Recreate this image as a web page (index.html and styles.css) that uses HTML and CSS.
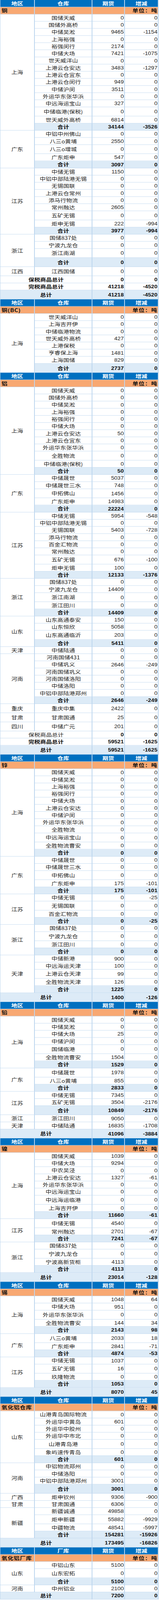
FILE: index.html
```html
<!DOCTYPE html>
<html lang="zh-CN">
<head>
<meta charset="utf-8">
<title>库存</title>
<link rel="stylesheet" href="styles.css">
</head>
<body>
<div class="frame">
<div class="sheet">
<!-- 铜 -->
<div class="r hd"><div class="c c1">地区</div><div class="c c2">仓库</div><div class="c c3">期货</div><div class="c c4">增减</div></div>
<div class="r un"><div class="c c1 ul">铜</div><div class="c c2"></div><div class="c c3"></div><div class="c c4 ur">单位：吨</div></div>
<div class="blk"><div class="rg">上海</div><div class="rows">
<div class="r"><div class="c c2">国储天威</div><div class="c c3">0</div><div class="c c4">0</div></div>
<div class="r"><div class="c c2">国储外高桥</div><div class="c c3">0</div><div class="c c4">0</div></div>
<div class="r"><div class="c c2">中储吴淞</div><div class="c c3">9465</div><div class="c c4">-1154</div></div>
<div class="r"><div class="c c2">上海裕强</div><div class="c c3">0</div><div class="c c4">0</div></div>
<div class="r"><div class="c c2">裕强闵行</div><div class="c c3">2174</div><div class="c c4">0</div></div>
<div class="r"><div class="c c2">中储大场</div><div class="c c3">7421</div><div class="c c4">-1075</div></div>
<div class="r"><div class="c c2">世天威洋山</div><div class="c c3">0</div><div class="c c4">0</div></div>
<div class="r"><div class="c c2">上港云仓安达</div><div class="c c3">3483</div><div class="c c4">-1297</div></div>
<div class="r"><div class="c c2">上港云仓宜东</div><div class="c c3">0</div><div class="c c4">0</div></div>
<div class="r"><div class="c c2">上港云仓闵行</div><div class="c c3">949</div><div class="c c4">0</div></div>
<div class="r"><div class="c c2">中储沪闵</div><div class="c c3">3511</div><div class="c c4">0</div></div>
<div class="r"><div class="c c2">外运华东张华浜</div><div class="c c3">0</div><div class="c c4">0</div></div>
<div class="r"><div class="c c2">中远海运宝山</div><div class="c c3">327</div><div class="c c4">0</div></div>
<div class="r t"><div class="c c2">中储临港(保税)</div><div class="c c3">0</div><div class="c c4">0</div></div>
<div class="r"><div class="c c2">世天威外高桥</div><div class="c c3">6814</div><div class="c c4">0</div></div>
<div class="r s"><div class="c c2">合计</div><div class="c c3">34144</div><div class="c c4">-3526</div></div>
</div></div>
<div class="blk"><div class="rg">广东</div><div class="rows">
<div class="r"><div class="c c2">中铝中州佛山</div><div class="c c3">0</div><div class="c c4">0</div></div>
<div class="r"><div class="c c2">八三o黄埔</div><div class="c c3">2550</div><div class="c c4">0</div></div>
<div class="r t"><div class="c c2">八三o增城</div><div class="c c3">0</div><div class="c c4">0</div></div>
<div class="r"><div class="c c2">广东炬申</div><div class="c c3">547</div><div class="c c4">0</div></div>
<div class="r s"><div class="c c2">合计</div><div class="c c3">3097</div><div class="c c4">0</div></div>
</div></div>
<div class="blk"><div class="rg">江苏</div><div class="rows">
<div class="r"><div class="c c2">中储无锡</div><div class="c c3">1150</div><div class="c c4">0</div></div>
<div class="r"><div class="c c2">中铝中部陆港无锡</div><div class="c c3">0</div><div class="c c4">0</div></div>
<div class="r"><div class="c c2">无锡国联</div><div class="c c3">0</div><div class="c c4">0</div></div>
<div class="r"><div class="c c2">上港云仓常州</div><div class="c c3">0</div><div class="c c4">0</div></div>
<div class="r"><div class="c c2">添马行物流</div><div class="c c3">0</div><div class="c c4">0</div></div>
<div class="r"><div class="c c2">常州融达</div><div class="c c3">2605</div><div class="c c4">0</div></div>
<div class="r t"><div class="c c2">五矿无锡</div><div class="c c3">0</div><div class="c c4">0</div></div>
<div class="r"><div class="c c2">炬申无锡</div><div class="c c3">222</div><div class="c c4">-994</div></div>
<div class="r s"><div class="c c2">合计</div><div class="c c3">3977</div><div class="c c4">-994</div></div>
</div></div>
<div class="blk"><div class="rg">浙江</div><div class="rows">
<div class="r"><div class="c c2">国储837处</div><div class="c c3">0</div><div class="c c4">0</div></div>
<div class="r"><div class="c c2">宁波九龙仓</div><div class="c c3">0</div><div class="c c4">0</div></div>
<div class="r t"><div class="c c2">浙江南湖</div><div class="c c3">0</div><div class="c c4">0</div></div>
<div class="r s t"><div class="c c2">合计</div><div class="c c3">0</div><div class="c c4">0</div></div>
</div></div>
<div class="r t"><div class="c c1">江西</div><div class="c c2">江西国储</div><div class="c c3">0</div><div class="c c4">0</div></div>
<div class="r w"><div class="c c12">保税商品总计</div><div class="c c3">0</div><div class="c c4">0</div></div>
<div class="r w"><div class="c c12">完税商品总计</div><div class="c c3">41218</div><div class="c c4">-4520</div></div>
<div class="r g t"><div class="c c12">总计</div><div class="c c3">41218</div><div class="c c4">-4520</div></div>

<!-- 铜(BC) -->
<div class="r hd"><div class="c c1">地区</div><div class="c c2">仓库</div><div class="c c3">期货</div><div class="c c4">增减</div></div>
<div class="r un"><div class="c c1 ul">铜(BC)</div><div class="c c2"></div><div class="c c3"></div><div class="c c4 ur">单位：吨</div></div>
<div class="blk"><div class="rg">上海</div><div class="rows">
<div class="r"><div class="c c2">世天威洋山</div><div class="c c3">0</div><div class="c c4">0</div></div>
<div class="r"><div class="c c2">上海吉开伊</div><div class="c c3">0</div><div class="c c4">0</div></div>
<div class="r"><div class="c c2">中储临港物流</div><div class="c c3">0</div><div class="c c4">0</div></div>
<div class="r"><div class="c c2">世天威外高桥</div><div class="c c3">427</div><div class="c c4">0</div></div>
<div class="r"><div class="c c2">上港保税</div><div class="c c3">0</div><div class="c c4">0</div></div>
<div class="r"><div class="c c2">亨睿保上海</div><div class="c c3">1481</div><div class="c c4">0</div></div>
<div class="r"><div class="c c2">上海国储</div><div class="c c3">829</div><div class="c c4">0</div></div>
<div class="r s t"><div class="c c2">合计</div><div class="c c3">2737</div><div class="c c4">0</div></div>
</div></div>

<!-- 铝 -->
<div class="r hd"><div class="c c1">地区</div><div class="c c2">仓库</div><div class="c c3">期货</div><div class="c c4">增减</div></div>
<div class="r un"><div class="c c1 ul">铝</div><div class="c c2"></div><div class="c c3"></div><div class="c c4 ur">单位：吨</div></div>
<div class="blk"><div class="rg">上海</div><div class="rows">
<div class="r"><div class="c c2">国储天威</div><div class="c c3">0</div><div class="c c4">0</div></div>
<div class="r"><div class="c c2">国储外高桥</div><div class="c c3">0</div><div class="c c4">0</div></div>
<div class="r"><div class="c c2">中储吴淞</div><div class="c c3">0</div><div class="c c4">0</div></div>
<div class="r"><div class="c c2">上海裕强</div><div class="c c3">0</div><div class="c c4">0</div></div>
<div class="r"><div class="c c2">裕强闵行</div><div class="c c3">0</div><div class="c c4">0</div></div>
<div class="r"><div class="c c2">中储大场</div><div class="c c3">0</div><div class="c c4">0</div></div>
<div class="r"><div class="c c2">上港云仓安达</div><div class="c c3">50</div><div class="c c4">0</div></div>
<div class="r"><div class="c c2">上港云仓宜东</div><div class="c c3">0</div><div class="c c4">0</div></div>
<div class="r"><div class="c c2">外运华东张华浜</div><div class="c c3">0</div><div class="c c4">0</div></div>
<div class="r t"><div class="c c2">全胜物流</div><div class="c c3">0</div><div class="c c4">0</div></div>
<div class="r"><div class="c c2">中储临港(保税)</div><div class="c c3">0</div><div class="c c4">0</div></div>
<div class="r s"><div class="c c2">合计</div><div class="c c3">50</div><div class="c c4">0</div></div>
</div></div>
<div class="blk"><div class="rg">广东</div><div class="rows">
<div class="r"><div class="c c2">中储晟世</div><div class="c c3">5037</div><div class="c c4">0</div></div>
<div class="r"><div class="c c2">中储晟世三水</div><div class="c c3">748</div><div class="c c4">0</div></div>
<div class="r t"><div class="c c2">中拓佛山</div><div class="c c3">1456</div><div class="c c4">0</div></div>
<div class="r"><div class="c c2">广东炬申</div><div class="c c3">14983</div><div class="c c4">0</div></div>
<div class="r s"><div class="c c2">合计</div><div class="c c3">22224</div><div class="c c4">0</div></div>
</div></div>
<div class="blk"><div class="rg">江苏</div><div class="rows">
<div class="r"><div class="c c2">中储无锡</div><div class="c c3">5954</div><div class="c c4">-548</div></div>
<div class="r"><div class="c c2">中铝中部陆港无锡</div><div class="c c3">0</div><div class="c c4">0</div></div>
<div class="r"><div class="c c2">无锡国联</div><div class="c c3">5403</div><div class="c c4">-728</div></div>
<div class="r"><div class="c c2">添马行物流</div><div class="c c3">0</div><div class="c c4">0</div></div>
<div class="r"><div class="c c2">百金汇物流</div><div class="c c3">0</div><div class="c c4">0</div></div>
<div class="r"><div class="c c2">常州融达</div><div class="c c3">0</div><div class="c c4">0</div></div>
<div class="r t"><div class="c c2">五矿无锡</div><div class="c c3">676</div><div class="c c4">-100</div></div>
<div class="r"><div class="c c2">炬申无锡</div><div class="c c3">100</div><div class="c c4">0</div></div>
<div class="r s"><div class="c c2">合计</div><div class="c c3">12133</div><div class="c c4">-1376</div></div>
</div></div>
<div class="blk"><div class="rg">浙江</div><div class="rows">
<div class="r"><div class="c c2">国储837处</div><div class="c c3">0</div><div class="c c4">0</div></div>
<div class="r"><div class="c c2">宁波九龙仓</div><div class="c c3">14409</div><div class="c c4">0</div></div>
<div class="r t"><div class="c c2">浙江南湖</div><div class="c c3">0</div><div class="c c4">0</div></div>
<div class="r"><div class="c c2">浙江田川</div><div class="c c3">0</div><div class="c c4">0</div></div>
<div class="r s"><div class="c c2">合计</div><div class="c c3">14409</div><div class="c c4">0</div></div>
</div></div>
<div class="blk"><div class="rg">山东</div><div class="rows">
<div class="r"><div class="c c2">山东高通泰安</div><div class="c c3">150</div><div class="c c4">0</div></div>
<div class="r"><div class="c c2">山东恒欣</div><div class="c c3">5058</div><div class="c c4">0</div></div>
<div class="r t"><div class="c c2">山东高通临沂</div><div class="c c3">203</div><div class="c c4">0</div></div>
<div class="r s"><div class="c c2">合计</div><div class="c c3">5411</div><div class="c c4">0</div></div>
</div></div>
<div class="r"><div class="c c1">天津</div><div class="c c2">中储陆通</div><div class="c c3">0</div><div class="c c4">0</div></div>
<div class="blk"><div class="rg">河南</div><div class="rows">
<div class="r"><div class="c c2">河南国储431</div><div class="c c3">0</div><div class="c c4">0</div></div>
<div class="r"><div class="c c2">中储巩义</div><div class="c c3">2646</div><div class="c c4">-249</div></div>
<div class="r"><div class="c c2">河南国储巩义</div><div class="c c3">0</div><div class="c c4">0</div></div>
<div class="r"><div class="c c2">河南国储洛阳</div><div class="c c3">0</div><div class="c c4">0</div></div>
<div class="r"><div class="c c2">中储洛阳</div><div class="c c3">0</div><div class="c c4">0</div></div>
<div class="r"><div class="c c2">中铝中部陆港郑州</div><div class="c c3">0</div><div class="c c4">0</div></div>
<div class="r s"><div class="c c2">合计</div><div class="c c3">2646</div><div class="c c4">-249</div></div>
</div></div>
<div class="r t"><div class="c c1">重庆</div><div class="c c2">重庆中集</div><div class="c c3">2422</div><div class="c c4">0</div></div>
<div class="r t"><div class="c c1">甘肃</div><div class="c c2">甘肃国通</div><div class="c c3">25</div><div class="c c4">0</div></div>
<div class="r t"><div class="c c1">四川</div><div class="c c2">中储广元</div><div class="c c3">201</div><div class="c c4">0</div></div>
<div class="r w"><div class="c c12 nb">保税商品总计</div><div class="c c3">0</div><div class="c c4">0</div></div>
<div class="r w"><div class="c c12">完税商品总计</div><div class="c c3">59521</div><div class="c c4">-1625</div></div>
<div class="r g t"><div class="c c12">总计</div><div class="c c3">59521</div><div class="c c4">-1625</div></div>

<!-- 锌 -->
<div class="r hd"><div class="c c1">地区</div><div class="c c2">仓库</div><div class="c c3">期货</div><div class="c c4">增减</div></div>
<div class="r un"><div class="c c1 ul">锌</div><div class="c c2"></div><div class="c c3"></div><div class="c c4 ur">单位：吨</div></div>
<div class="blk"><div class="rg">上海</div><div class="rows">
<div class="r"><div class="c c2">国储天威</div><div class="c c3">0</div><div class="c c4">0</div></div>
<div class="r"><div class="c c2">中储吴淞</div><div class="c c3">0</div><div class="c c4">0</div></div>
<div class="r"><div class="c c2">上海裕强</div><div class="c c3">0</div><div class="c c4">0</div></div>
<div class="r"><div class="c c2">裕强闵行</div><div class="c c3">0</div><div class="c c4">0</div></div>
<div class="r"><div class="c c2">中储大场</div><div class="c c3">0</div><div class="c c4">0</div></div>
<div class="r"><div class="c c2">上港云仓安达</div><div class="c c3">0</div><div class="c c4">0</div></div>
<div class="r"><div class="c c2">中储沪闵</div><div class="c c3">0</div><div class="c c4">0</div></div>
<div class="r"><div class="c c2">外运华东张华浜</div><div class="c c3">0</div><div class="c c4">0</div></div>
<div class="r"><div class="c c2">全胜物流</div><div class="c c3">0</div><div class="c c4">0</div></div>
<div class="r t"><div class="c c2">中远海运宝山</div><div class="c c3">0</div><div class="c c4">0</div></div>
<div class="r"><div class="c c2">全胜物流曹安</div><div class="c c3">0</div><div class="c c4">0</div></div>
<div class="r s"><div class="c c2">合计</div><div class="c c3">0</div><div class="c c4">0</div></div>
</div></div>
<div class="blk"><div class="rg">广东</div><div class="rows">
<div class="r"><div class="c c2">中储晟世</div><div class="c c3">0</div><div class="c c4">0</div></div>
<div class="r"><div class="c c2">中储晟世三水</div><div class="c c3">0</div><div class="c c4">0</div></div>
<div class="r t"><div class="c c2">中拓佛山</div><div class="c c3">0</div><div class="c c4">0</div></div>
<div class="r"><div class="c c2">广东炬申</div><div class="c c3">175</div><div class="c c4">-101</div></div>
<div class="r s"><div class="c c2">合计</div><div class="c c3">175</div><div class="c c4">-101</div></div>
</div></div>
<div class="blk"><div class="rg">江苏</div><div class="rows">
<div class="r"><div class="c c2">中储无锡</div><div class="c c3">0</div><div class="c c4">-25</div></div>
<div class="r t"><div class="c c2">无锡国联</div><div class="c c3">0</div><div class="c c4">0</div></div>
<div class="r"><div class="c c2">百金汇物流</div><div class="c c3">0</div><div class="c c4">0</div></div>
<div class="r s"><div class="c c2">合计</div><div class="c c3">0</div><div class="c c4">-25</div></div>
</div></div>
<div class="blk"><div class="rg">浙江</div><div class="rows">
<div class="r"><div class="c c2">国储837处</div><div class="c c3">0</div><div class="c c4">0</div></div>
<div class="r t"><div class="c c2">宁波九龙仓</div><div class="c c3">0</div><div class="c c4">0</div></div>
<div class="r"><div class="c c2">浙江田川</div><div class="c c3">0</div><div class="c c4">0</div></div>
<div class="r s"><div class="c c2">合计</div><div class="c c3">0</div><div class="c c4">0</div></div>
</div></div>
<div class="blk"><div class="rg">天津</div><div class="rows">
<div class="r"><div class="c c2">中储新港</div><div class="c c3">900</div><div class="c c4">0</div></div>
<div class="r"><div class="c c2">中远海运天津</div><div class="c c3">100</div><div class="c c4">0</div></div>
<div class="r t"><div class="c c2">上港云仓天津</div><div class="c c3">99</div><div class="c c4">0</div></div>
<div class="r"><div class="c c2">全胜物流天津</div><div class="c c3">126</div><div class="c c4">0</div></div>
<div class="r s"><div class="c c2">合计</div><div class="c c3">1225</div><div class="c c4">0</div></div>
</div></div>
<div class="r g t"><div class="c c12">总计</div><div class="c c3">1400</div><div class="c c4">-126</div></div>

<!-- 铅 -->
<div class="r hd"><div class="c c1">地区</div><div class="c c2">仓库</div><div class="c c3">期货</div><div class="c c4">增减</div></div>
<div class="r un"><div class="c c1 ul">铅</div><div class="c c2"></div><div class="c c3"></div><div class="c c4 ur">单位：吨</div></div>
<div class="blk"><div class="rg">上海</div><div class="rows">
<div class="r"><div class="c c2">国储天威</div><div class="c c3">0</div><div class="c c4">0</div></div>
<div class="r"><div class="c c2">中储吴淞</div><div class="c c3">0</div><div class="c c4">0</div></div>
<div class="r"><div class="c c2">中储大场</div><div class="c c3">25</div><div class="c c4">0</div></div>
<div class="r"><div class="c c2">中储沪闵</div><div class="c c3">0</div><div class="c c4">0</div></div>
<div class="r t"><div class="c c2">国储临港</div><div class="c c3">0</div><div class="c c4">0</div></div>
<div class="r"><div class="c c2">全胜物流曹安</div><div class="c c3">1504</div><div class="c c4">0</div></div>
<div class="r s"><div class="c c2">合计</div><div class="c c3">1529</div><div class="c c4">0</div></div>
</div></div>
<div class="blk"><div class="rg">广东</div><div class="rows">
<div class="r t"><div class="c c2">中储晟世</div><div class="c c3">1978</div><div class="c c4">0</div></div>
<div class="r"><div class="c c2">八三o黄埔</div><div class="c c3">855</div><div class="c c4">0</div></div>
<div class="r s"><div class="c c2">合计</div><div class="c c3">2833</div><div class="c c4">0</div></div>
</div></div>
<div class="blk"><div class="rg">江苏</div><div class="rows">
<div class="r"><div class="c c2">中储无锡</div><div class="c c3">7345</div><div class="c c4">0</div></div>
<div class="r"><div class="c c2">五矿无锡</div><div class="c c3">3504</div><div class="c c4">-2176</div></div>
<div class="r s t"><div class="c c2">合计</div><div class="c c3">10849</div><div class="c c4">-2176</div></div>
</div></div>
<div class="r"><div class="c c1">浙江</div><div class="c c2">浙江田川</div><div class="c c3">9050</div><div class="c c4">0</div></div>
<div class="r"><div class="c c1">天津</div><div class="c c2">中储陆通</div><div class="c c3">16835</div><div class="c c4">-1708</div></div>
<div class="r g t"><div class="c c12">总计</div><div class="c c3">41096</div><div class="c c4">-3884</div></div>

<!-- 镍 -->
<div class="r hd"><div class="c c1">地区</div><div class="c c2">仓库</div><div class="c c3">期货</div><div class="c c4">增减</div></div>
<div class="r un"><div class="c c1 ul">镍</div><div class="c c2"></div><div class="c c3"></div><div class="c c4 ur">单位：吨</div></div>
<div class="blk"><div class="rg">上海</div><div class="rows">
<div class="r"><div class="c c2">国储天威</div><div class="c c3">1039</div><div class="c c4">0</div></div>
<div class="r"><div class="c c2">中储大场</div><div class="c c3">9294</div><div class="c c4">0</div></div>
<div class="r"><div class="c c2">中农吴泾</div><div class="c c3">0</div><div class="c c4">0</div></div>
<div class="r"><div class="c c2">上港云仓安达</div><div class="c c3">1327</div><div class="c c4">-61</div></div>
<div class="r"><div class="c c2">外运华东张华浜</div><div class="c c3">0</div><div class="c c4">0</div></div>
<div class="r"><div class="c c2">中远海运宝山</div><div class="c c3">0</div><div class="c c4">0</div></div>
<div class="r t"><div class="c c2">中远海运临港</div><div class="c c3">0</div><div class="c c4">0</div></div>
<div class="r"><div class="c c2">上海吉开伊</div><div class="c c3">0</div><div class="c c4">0</div></div>
<div class="r s"><div class="c c2">合计</div><div class="c c3">11660</div><div class="c c4">-61</div></div>
</div></div>
<div class="blk"><div class="rg">江苏</div><div class="rows">
<div class="r t"><div class="c c2">中储无锡</div><div class="c c3">4540</div><div class="c c4">0</div></div>
<div class="r"><div class="c c2">常州融达</div><div class="c c3">2701</div><div class="c c4">-67</div></div>
<div class="r s"><div class="c c2">合计</div><div class="c c3">7241</div><div class="c c4">-67</div></div>
</div></div>
<div class="blk"><div class="rg">浙江</div><div class="rows">
<div class="r"><div class="c c2">国储837处</div><div class="c c3">0</div><div class="c c4">0</div></div>
<div class="r t"><div class="c c2">宁波九龙仓</div><div class="c c3">0</div><div class="c c4">0</div></div>
<div class="r"><div class="c c2">宁波高新货柜</div><div class="c c3">4113</div><div class="c c4">0</div></div>
<div class="r s"><div class="c c2">合计</div><div class="c c3">4113</div><div class="c c4">0</div></div>
</div></div>
<div class="r g t"><div class="c c12">总计</div><div class="c c3">23014</div><div class="c c4">-128</div></div>

<!-- 锡 -->
<div class="r hd"><div class="c c1">地区</div><div class="c c2">仓库</div><div class="c c3">期货</div><div class="c c4">增减</div></div>
<div class="r un"><div class="c c1 ul">锡</div><div class="c c2"></div><div class="c c3"></div><div class="c c4 ur">单位：吨</div></div>
<div class="blk"><div class="rg">上海</div><div class="rows">
<div class="r"><div class="c c2">国储天威</div><div class="c c3">1048</div><div class="c c4">64</div></div>
<div class="r"><div class="c c2">中储大场</div><div class="c c3">951</div><div class="c c4">0</div></div>
<div class="r t"><div class="c c2">外运华东张华浜</div><div class="c c3">0</div><div class="c c4">0</div></div>
<div class="r"><div class="c c2">全胜物流曹安</div><div class="c c3">144</div><div class="c c4">34</div></div>
<div class="r s"><div class="c c2">合计</div><div class="c c3">2143</div><div class="c c4">98</div></div>
</div></div>
<div class="blk"><div class="rg">广东</div><div class="rows">
<div class="r t"><div class="c c2">八三o黄埔</div><div class="c c3">2033</div><div class="c c4">18</div></div>
<div class="r"><div class="c c2">广东炬申</div><div class="c c3">2841</div><div class="c c4">-71</div></div>
<div class="r s"><div class="c c2">合计</div><div class="c c3">4874</div><div class="c c4">-53</div></div>
</div></div>
<div class="blk"><div class="rg">江苏</div><div class="rows">
<div class="r"><div class="c c2">中储无锡</div><div class="c c3">1037</div><div class="c c4">0</div></div>
<div class="r t"><div class="c c2">五矿无锡</div><div class="c c3">16</div><div class="c c4">0</div></div>
<div class="r"><div class="c c2">玖隆物流</div><div class="c c3">0</div><div class="c c4">0</div></div>
<div class="r s"><div class="c c2">合计</div><div class="c c3">1053</div><div class="c c4">0</div></div>
</div></div>
<div class="r g t"><div class="c c12">总计</div><div class="c c3">8070</div><div class="c c4">45</div></div>

<!-- 氧化铝仓库 -->
<div class="r hd"><div class="c c1">地区</div><div class="c c2">仓库</div><div class="c c3">期货</div><div class="c c4">增减</div></div>
<div class="r un"><div class="c c1 ul">氧化铝仓库</div><div class="c c2"></div><div class="c c3"></div><div class="c c4 ur">单位：吨</div></div>
<div class="blk"><div class="rg">山东</div><div class="rows">
<div class="r"><div class="c c2">山港青岛国际物流</div><div class="c c3">0</div><div class="c c4">0</div></div>
<div class="r"><div class="c c2">外运华中黄岛</div><div class="c c3">601</div><div class="c c4">0</div></div>
<div class="r"><div class="c c2">外运华中胶州</div><div class="c c3">0</div><div class="c c4">0</div></div>
<div class="r"><div class="c c2">外运华中市北</div><div class="c c3">0</div><div class="c c4">0</div></div>
<div class="r t"><div class="c c2">山港青岛港</div><div class="c c3">0</div><div class="c c4">0</div></div>
<div class="r"><div class="c c2">象屿速传青岛</div><div class="c c3">0</div><div class="c c4">0</div></div>
<div class="r s"><div class="c c2">合计</div><div class="c c3">601</div><div class="c c4">0</div></div>
</div></div>
<div class="blk"><div class="rg">河南</div><div class="rows">
<div class="r"><div class="c c2">中铝物流郑州</div><div class="c c3">0</div><div class="c c4">0</div></div>
<div class="r"><div class="c c2">中储洛阳</div><div class="c c3">0</div><div class="c c4">0</div></div>
<div class="r"><div class="c c2">中铝中部陆港郑州</div><div class="c c3">3001</div><div class="c c4">0</div></div>
<div class="r s t"><div class="c c2">合计</div><div class="c c3">3001</div><div class="c c4">0</div></div>
</div></div>
<div class="r"><div class="c c1">广西</div><div class="c c2">炬申钦州</div><div class="c c3">9306</div><div class="c c4">-900</div></div>
<div class="r"><div class="c c1">甘肃</div><div class="c c2">甘肃国通</div><div class="c c3">6306</div><div class="c c4">0</div></div>
<div class="blk"><div class="rg">新疆</div><div class="rows">
<div class="r"><div class="c c2">新疆诚通</div><div class="c c3">49858</div><div class="c c4">0</div></div>
<div class="r t"><div class="c c2">炬申新疆</div><div class="c c3">55882</div><div class="c c4">-9929</div></div>
<div class="r"><div class="c c2">中疆物流</div><div class="c c3">48541</div><div class="c c4">-5997</div></div>
<div class="r s"><div class="c c2">合计</div><div class="c c3">154281</div><div class="c c4">-15926</div></div>
</div></div>
<div class="r g t"><div class="c c12">总计</div><div class="c c3">173495</div><div class="c c4">-16826</div></div>

<!-- 氧化铝厂库 -->
<div class="r hd"><div class="c c1">地区</div><div class="c c2">厂库</div><div class="c c3">期货</div><div class="c c4">增减</div></div>
<div class="r un"><div class="c c1 ul">氧化铝厂库</div><div class="c c2"></div><div class="c c3"></div><div class="c c4 ur">单位：吨</div></div>
<div class="blk"><div class="rg">山东</div><div class="rows">
<div class="r"><div class="c c2">中铝山东</div><div class="c c3">5100</div><div class="c c4">0</div></div>
<div class="r t"><div class="c c2">山东宏拓</div><div class="c c3">0</div><div class="c c4">0</div></div>
<div class="r s"><div class="c c2">合计</div><div class="c c3">5100</div><div class="c c4">0</div></div>
</div></div>
<div class="r"><div class="c c1">河南</div><div class="c c2">中州铝业</div><div class="c c3">2100</div><div class="c c4">0</div></div>
<div class="r g"><div class="c c12">总计</div><div class="c c3">7200</div><div class="c c4">0</div></div>
</div>
</div>
</body>
</html>
```

FILE: styles.css
```css
html, body {
  margin: 0;
  padding: 0;
  background: #ffffff;
}

body {
  font-family: "Noto Sans CJK SC", sans-serif;
  font-size: 15px;
  line-height: 18px;
  color: #1e1e1e;
}

/* The capture window is 4096px tall and is shown at 4928px;
   the sheet is drawn at the matching vertical ratio so it fills the frame. */
.frame {
  height: 4096px;
  overflow: hidden;
}

.sheet {
  width: 405px;
  box-sizing: border-box;
  border-left: 1px solid #bdd6ee;
  transform: scaleY(0.83117);
  transform-origin: 0 0;
}

/* a row of cells */
.r {
  display: flex;
  height: 22px;
}

.r.t {
  height: 28px;
}

/* a region block: region cell + stack of rows */
.blk {
  display: flex;
}

.rows {
  display: flex;
  flex-direction: column;
}

.rg,
.c {
  box-sizing: border-box;
  border-right: 2px solid #bdd6ee;
  border-bottom: 1px solid #bdd6ee;
  display: flex;
  align-items: center;
  justify-content: center;
  white-space: nowrap;
  flex: none;
}

.rg {
  width: 88px;
}

.c1 { width: 88px; }
.c2 { width: 147px; }
.c3 { width: 83px; }
.c4 { width: 86px; }
.c12 { width: 235px; }

/* number columns */
.c3,
.c4 {
  justify-content: flex-end;
  padding-right: 1px;
  font-family: "Liberation Sans", Arial, sans-serif;
  font-size: 14.5px;
}

/* header row */
.hd .c {
  background: #0070c0;
  color: #ffffff;
  font-weight: bold;
  justify-content: center;
  font-family: "Noto Sans CJK SC", sans-serif;
  font-size: 15px;
  padding: 0;
}

/* unit row */
.un .c {
  background: #f8a872;
  color: #111111;
  font-weight: bold;
  font-family: "Noto Sans CJK SC", sans-serif;
  font-size: 15px;
}

.un .ul {
  justify-content: flex-start;
  padding-left: 3px;
  letter-spacing: 0.5px;
}

.un .ur {
  justify-content: flex-end;
  padding-right: 1px;
  letter-spacing: 1px;
}

/* subtotal rows */
.s .c {
  background: #ddebf7;
  font-weight: bold;
  color: #111111;
}

/* grand total rows */
.g .c {
  background: #ddebf7;
  font-weight: bold;
  color: #111111;
}

/* bonded / duty-paid totals */
.w .c {
  font-weight: bold;
  color: #111111;
}

.w .nb {
  font-weight: normal;
  color: #1e1e1e;
}
```
